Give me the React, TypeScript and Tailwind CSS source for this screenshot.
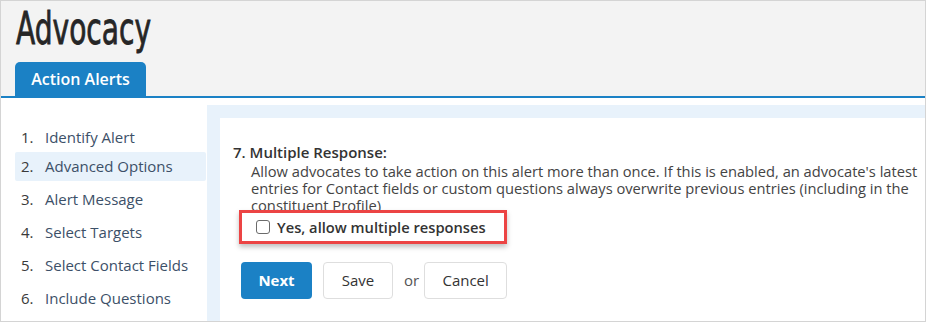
import React from 'react'

const steps = [
  'Identify Alert',
  'Advanced Options',
  'Alert Message',
  'Select Targets',
  'Select Contact Fields',
  'Include Questions',
]

export default function App() {
  return (
    <div className="w-[926px] h-[322px] overflow-hidden border border-[#d4d4d4] bg-white font-['Open_Sans',sans-serif] text-[#333]">
      {/* Header */}
      <header className="h-[95px] bg-[#f3f3f3] px-[15px] flex flex-col justify-between">
        <h1 className="pt-[4px] text-[44px] leading-[48px] font-normal text-[#262626] [-webkit-text-stroke:0.8px_#262626] font-['DejaVu_Sans_Condensed','Liberation_Sans_Narrow',sans-serif] origin-left scale-x-[0.71]">
          Advocacy
        </h1>
        <div className="flex -ml-px">
          <div className="h-[34px] w-[131px] rounded-t-[5px] bg-[#1b81c5] text-white text-[16px] font-semibold flex items-center justify-center">
            Action Alerts
          </div>
        </div>
      </header>
      <div className="h-[2px] bg-[#1b81c5]" />

      <div className="flex h-[224px]">
        {/* Steps */}
        <nav className="w-[206px] shrink-0 pl-[14px] pr-[1px] pt-[25px]">
          {steps.map((s, i) => (
            <div
              key={s}
              className={`h-[29px] flex items-center pl-[6px] rounded-[2px] text-[15px] ${i >= 2 ? 'mt-[4px]' : ''} ${i === 1 ? 'bg-[#e8f2fb]' : ''}`}
            >
              <span className="w-[24px] text-[#3a3a3a]">{i + 1}.</span>
              <span className="text-[#3c5068]">{s}</span>
            </div>
          ))}
        </nav>

        {/* Main */}
        <main className="flex-1 mt-[7px] bg-[#e8f2fb] pl-[13px] pt-[13px]">
          <div className="h-full bg-white pl-[13px] pt-[26px]">
            <div className="text-[15px] leading-[17px] font-semibold text-[#333]">7. Multiple Response:</div>
            <p className="ml-[18px] mt-[2px] text-[14.7px] leading-[17px] text-[#444] pr-[6px]">
              Allow advocates to take action on this alert more than once. If this is enabled, an advocate's latest
              entries for Contact fields or custom questions always overwrite previous entries (including in the
              constituent Profile)
            </p>
            <div className="relative -mt-[4px] ml-[6px] w-[268px] h-[34px] bg-white border-[3px] border-[#ec4444] shadow-[0_3px_5px_rgba(0,0,0,0.25)] flex items-center pl-[14px]">
              <span className="w-[14px] h-[14px] rounded-[3px] border border-[#6b6b6b] bg-white" />
              <span className="ml-[7px] text-[14.7px] font-semibold text-[#333]">Yes, allow multiple responses</span>
            </div>
            <div className="flex items-center ml-[8px] mt-[18px]">
              <button className="w-[71px] h-[37px] rounded-[4px] bg-[#1b81c5] text-white text-[15px] font-bold">Next</button>
              <button className="ml-[11px] w-[70px] h-[37px] rounded-[4px] border border-[#dedede] bg-white text-[15px] text-[#333]">Save</button>
              <span className="ml-[11px] mr-[5px] text-[15px] text-[#555]">or</span>
              <button className="w-[83px] h-[37px] rounded-[4px] border border-[#dedede] bg-white text-[15px] text-[#333]">Cancel</button>
            </div>
          </div>
        </main>
      </div>
    </div>
  )
}
